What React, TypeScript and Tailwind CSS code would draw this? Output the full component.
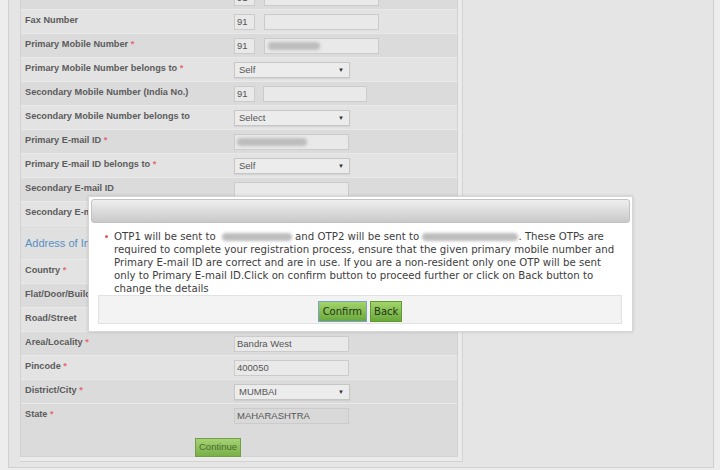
import type { ReactNode } from "react";

// form row: label column on the left, controls start at x=234
function Row({
  label,
  req,
  dark,
  children,
}: {
  label?: string;
  req?: boolean;
  dark?: boolean;
  children?: ReactNode;
}) {
  return (
    <div
      className={`flex h-[24px] items-start pt-[4px] ${dark ? "bg-[#dbdbdb]" : "bg-[#e3e3e3]"} border-t border-[#e9e9e9]`}
    >
      <div className="w-[213px] shrink-0 overflow-hidden whitespace-nowrap pl-[4px] text-[9.2px] font-bold leading-[12px] text-[#5c5c5c]">
        {label}
        {req && <span className="text-[#e46a6a]"> *</span>}
      </div>
      <div className="flex">{children}</div>
    </div>
  );
}

function Box({ w, children, disabled }: { w: string; children?: ReactNode; disabled?: boolean }) {
  return (
    <div
      className={`flex h-[16px] items-center overflow-hidden border border-[#cbcbcb] px-[2px] text-[9.5px] text-[#555] ${w} ${disabled ? "bg-[#d9d9d9]" : "bg-[#e9e9e9]"}`}
    >
      {children}
    </div>
  );
}

function Select({ value }: { value: string }) {
  return (
    <div className="flex h-[16px] w-[116px] items-center justify-between border border-[#c6c6c6] bg-[#ececec] pl-[4px] pr-[5px] text-[9.5px] text-[#555] shadow-[0_1px_1px_rgba(0,0,0,0.06)]">
      <span>{value}</span>
      <span className="text-[6px] text-[#333]">▼</span>
    </div>
  );
}

function Smudge({ w }: { w: string }) {
  return <span className={`inline-block h-[8px] rounded-sm bg-[#bdbdbd] align-middle blur-[1.5px] ${w}`} />;
}

function Phone({ blurred, wide = "w-[115px]", gap = "ml-[9px]" }: { blurred?: boolean; wide?: string; gap?: string }) {
  return (
    <>
      <Box w="w-[21px]">91</Box>
      <div className={gap}>
        <Box w={wide}>{blurred && <Smudge w="w-[52px] ml-[1px]" />}</Box>
      </div>
    </>
  );
}

export default function App() {
  return (
    <div className="relative h-[470px] w-[720px] overflow-hidden bg-[#ededed] font-['Liberation_Sans',Arial,sans-serif]">
      <div className="ml-[8px] mt-[-16px] h-[484px] w-[706px] border border-[#d0d0d0] bg-[#e5e5e5] pl-[11px]">
        <div className="w-[443px] border-r border-b border-[#d3d3d3] bg-[#ebebeb] pb-[4px] pr-[4px]">
          <div className="w-[438px] border-x border-b border-[#d2d2d2]">
            <Row label="Landline Number" dark>
              <Phone />
            </Row>
            <Row label="Fax Number">
              <Phone />
            </Row>
            <Row label="Primary Mobile Number" req dark>
              <Phone blurred />
            </Row>
            <Row label="Primary Mobile Number belongs to" req>
              <Select value="Self" />
            </Row>
            <Row label="Secondary Mobile Number (India No.)" dark>
              <Phone wide="w-[104px]" gap="ml-[8px]" />
            </Row>
            <Row label="Secondary Mobile Number belongs to">
              <Select value="Select" />
            </Row>
            <Row label="Primary E-mail ID" req dark>
              <Box w="w-[115px]">
                <Smudge w="w-[70px]" />
              </Box>
            </Row>
            <Row label="Primary E-mail ID belongs to" req>
              <Select value="Self" />
            </Row>
            <Row label="Secondary E-mail ID" dark>
              <Box w="w-[115px]" />
            </Row>
            <Row label="Secondary E-mail ID belongs to">
              <Select value="Select" />
            </Row>
            <div className="h-[34px] border-t border-[#e9e9e9] bg-[#e0e0e0] pl-[4px] pt-[11px] text-[11px] leading-[13px] text-[#5a8fc2]">
              Address of Individual
            </div>
            <Row label="Country" req>
              <Select value="INDIA" />
            </Row>
            <Row label="Flat/Door/Building" req dark>
              <Box w="w-[115px]" />
            </Row>
            <Row label="Road/Street">
              <Box w="w-[115px]" />
            </Row>
            <Row label="Area/Locality" req dark>
              <Box w="w-[115px]">Bandra West</Box>
            </Row>
            <Row label="Pincode" req>
              <Box w="w-[115px]">400050</Box>
            </Row>
            <Row label="District/City" req dark>
              <Select value="MUMBAI" />
            </Row>
            <Row label="State" req dark>
              <Box w="w-[115px]" disabled>
                MAHARASHTRA
              </Box>
            </Row>
            <div className="h-[29px] bg-[#dbdbdb] pl-[174px] pt-[6px]">
              <button className="h-[19px] w-[46px] border border-[#6f9f48] bg-linear-to-b from-[#a6d274] to-[#78b046] text-[9.5px] text-[#4b6a2f]">
                Continue
              </button>
            </div>
          </div>
        </div>
      </div>

      {/* OTP confirmation dialog */}
      <div className="absolute left-[88px] top-[196px] w-[545px] border border-[#d6d6d6] bg-white p-[2px] pb-[7px] shadow-[0_0_3px_rgba(0,0,0,0.15)] font-['DejaVu_Sans',Verdana,sans-serif]">
        <div className="h-[24px] rounded-[3px] border border-[#c2c2c2] bg-linear-to-b from-[#efefef] to-[#c9c9c9]" />
        <div className="relative pl-[23px] pt-[7px] text-[10.2px] leading-[13px] text-[#3d3d3d]">
          <span className="absolute left-[14px] top-[12px] h-[3px] w-[3px] rounded-full bg-[#e05a5a]" />
          <div className="whitespace-nowrap">
            OTP1 will be sent to <Smudge w="w-[70px] ml-[3px]" /> and OTP2 will be sent to{" "}
            <Smudge w="w-[96px]" />. These OTPs are
          </div>
          <div className="whitespace-nowrap">
            required to complete your registration process, ensure that the given primary mobile number and
          </div>
          <div className="whitespace-nowrap">
            Primary E-mail ID are correct and are in use. If you are a non-resident only one OTP will be sent
          </div>
          <div className="whitespace-nowrap">
            only to Primary E-mail ID.Click on confirm button to proceed further or click on Back button to
          </div>
          <div className="whitespace-nowrap">change the details</div>
        </div>
        <div className="ml-[7px] mr-[8px] flex h-[29px] justify-center gap-[3px] border border-[#e2e2e2] bg-[#f3f3f3] pt-[5px]">
          <button className="h-[21px] border border-[#7c9fcf] bg-linear-to-b from-[#a2d46a] to-[#6aa83a] px-[4px] text-[10px] text-[#22341a]">
            Confirm
          </button>
          <button className="h-[21px] border border-[#5f9b31] bg-linear-to-b from-[#a2d46a] to-[#6aa83a] px-[3px] text-[10px] text-[#22341a]">
            Back
          </button>
        </div>
      </div>
    </div>
  );
}
